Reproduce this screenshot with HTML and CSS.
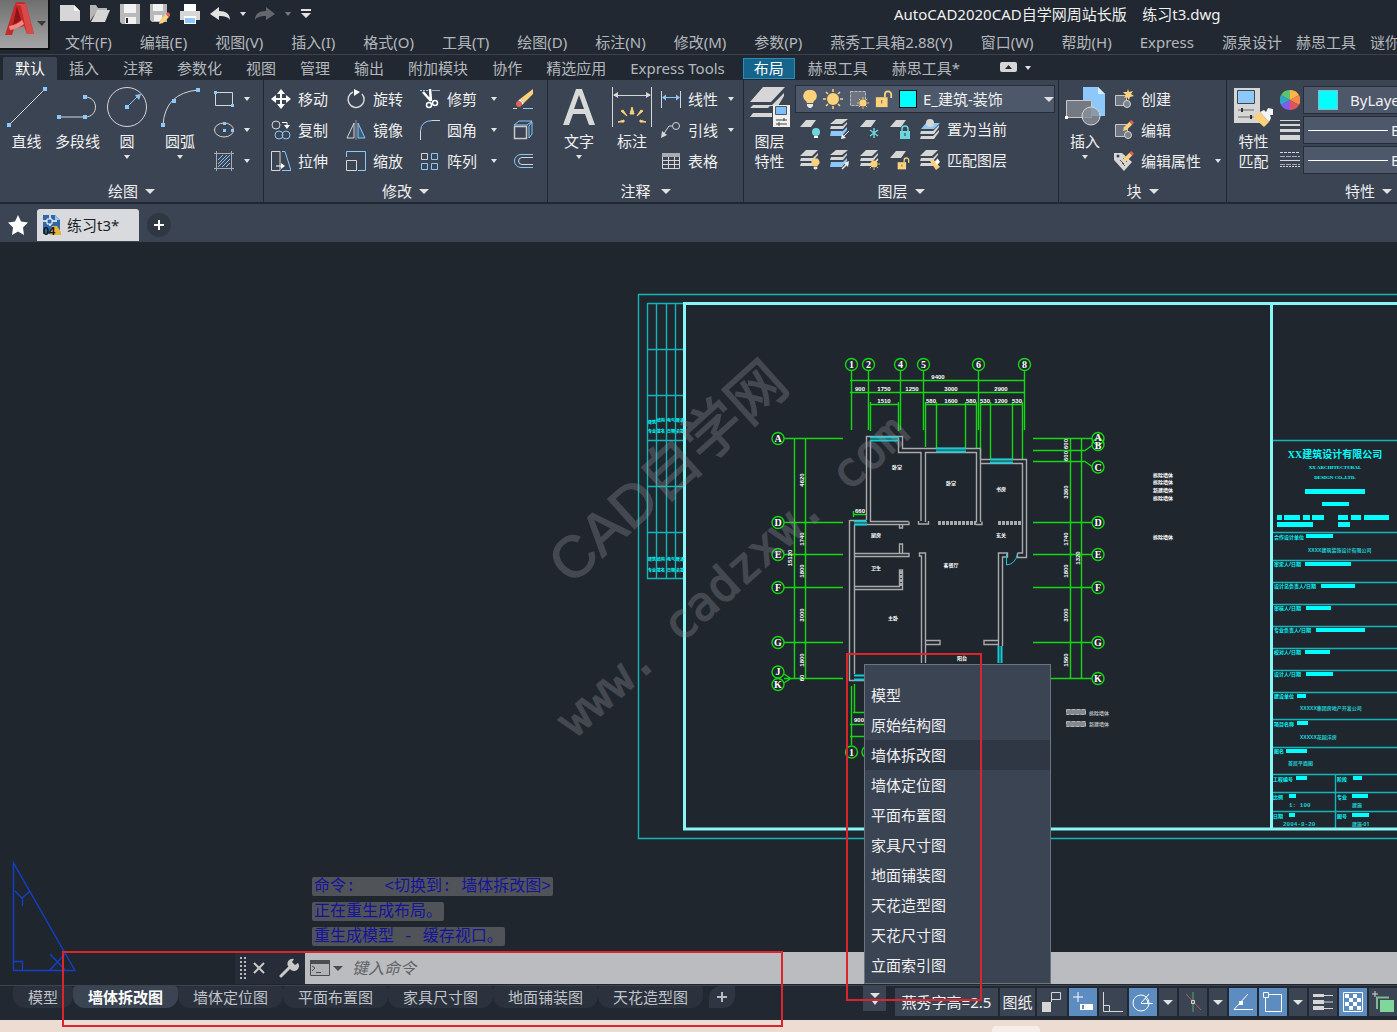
FILE: index.html
```html
<!DOCTYPE html>
<html lang="zh-CN">
<head>
    <meta charset="UTF-8">
    <meta name="viewport" content="width=device-width, initial-scale=1.0">
    <title>AutoCAD2020 练习t3.dwg</title>
    <link rel="stylesheet" href="styles.css">
</head>
<body>

<!-- shared icon parts -->
<svg class="defs" aria-hidden="true">
    <symbol id="sheet" viewBox="0 0 20 20"><path d="M6 1h10l-5 7H0z" fill="#d6d6d6"/></symbol>
    <symbol id="stack" viewBox="0 0 20 20">
        <path d="M6 0h12l-6 6H0z" fill="#d6d6d6"/>
        <path d="M1 8h12l5-5v2l-5 6H0zM1 13h12l5-5v2l-5 6H0z" fill="#d6d6d6"/>
    </symbol>
    <symbol id="stack-blue" viewBox="0 0 20 20">
        <path d="M6 0h12l-6 5H0z" fill="#d6d6d6"/>
        <path d="M1 7h12l4-4v2l-4 5H0z" fill="#d6d6d6"/>
        <path d="M1 12h12l4-4v3l-5 6H0z" fill="#8cc8fa"/>
    </symbol>
    <symbol id="bulb" viewBox="0 0 14 20">
        <path d="M7 1a6 6 0 0 0-4 11l1 2h6l1-2A6 6 0 0 0 7 1z" fill="#fdd27a"/>
        <path d="M4 15h6v2l-2 2H6l-2-2z" fill="#e8e8e8"/>
    </symbol>
    <symbol id="sun" viewBox="0 0 20 20">
        <circle cx="10" cy="10" r="6" fill="#fdd27a"/>
        <path d="M10 0v3M10 17v3M0 10h3M17 10h3M3 3l2 2M15 15l2 2M17 3l-2 2M5 15l-2 2" stroke="#fdd27a" stroke-width="1.5"/>
    </symbol>
    <symbol id="lock-open" viewBox="0 0 20 20">
        <path d="M1 8h13v11H1z" fill="#fdd27a"/>
        <path d="M11 8V5a3.500 3.500 0 0 1 7 0v4" fill="none" stroke="#fdd27a" stroke-width="2"/>
        <path d="M7 11h1v4H7z" fill="#6b5a30"/>
    </symbol>
    <symbol id="pencil" viewBox="0 0 12 12">
        <path d="M0 12l1-4 6-6 3 3-6 6z" fill="#fdd27a"/>
        <path d="M7 2l2-2 3 3-2 2z" fill="#e0605c"/>
    </symbol>
</svg>

<div class="app">

<header class="top">
    <button class="logo" aria-label="应用程序菜单">
        <svg width="50" height="49" viewBox="0 0 50 49">
            <path d="M5 35L15 4q1-2 4-2h3q3 0 4 2l8 30h-7l-3-8-10 3-2 6z" fill="#c62a2c"/>
            <path d="M17 6l4 14-8 5z" fill="#8a1416"/>
            <path d="M15 4l6 2 6 28h7L26 4z" fill="#d84a48"/>
            <path d="M9 26q8-1 13-6l2 4q-6 5-14 6z" fill="#ef8a84"/>
            <path d="M37 21h9l-4 5z" fill="#3a3a3a"/>
        </svg>
    </button>
    <div class="top-rows">
        <div class="quick">
            <button aria-label="新建"><svg width="20" height="20" viewBox="0 0 20 20"><path d="M0 1h14l6 6v10H0z" fill="#d6d6d6"/><path d="M14 1v6h6z" fill="#f6f6f6"/></svg></button>
            <button aria-label="打开"><svg width="20" height="20" viewBox="0 0 20 20"><path d="M0 17V1h6l2 3h9v3H7z" fill="#b5b5b5"/><path d="M1 18L7 6h13l-5 12z" fill="#d6d6d6"/></svg></button>
            <button aria-label="保存"><svg width="20" height="20" viewBox="0 0 20 20"><path d="M0 0h20v20H2l-2-2z" fill="#b9b9b9"/><path d="M4 0h12v9H4z" fill="#f2f2f2"/><path d="M5 13h11v7H5z" fill="#f2f2f2"/><path d="M6 14h2v5H6z" fill="#222831"/></svg></button>
            <button aria-label="另存为"><svg width="20" height="20" viewBox="0 0 20 20"><path d="M0 0h17v18H2l-2-2z" fill="#b9b9b9"/><path d="M3 0h10v7H3zM4 11h8v6H4z" fill="#f2f2f2"/><use href="#pencil" x="9" y="8" width="12" height="12"/></svg></button>
            <button aria-label="打印"><svg width="20" height="20" viewBox="0 0 20 20"><path d="M4 0h12v7H4z" fill="#fff"/><path d="M0 7h20v9H0z" fill="#d6d6d6"/><path d="M4 12h12v8H4z" fill="#fff"/><path d="M5 14h10v5H5z" fill="#8cc8fa"/></svg></button>
            <button aria-label="放弃"><svg width="20" height="20" viewBox="0 0 20 20"><path d="M0 10l9-7v4c7 0 11 3 11 9-2-3-5-4-11-4v4z" fill="#e2e2e2"/></svg></button>
            <button class="narrow" aria-label="放弃列表"><i class="caret"></i></button>
            <button aria-label="重做"><svg width="20" height="20" viewBox="0 0 20 20"><path d="M20 10l-9-7v4C4 7 0 10 0 16c2-3 5-4 11-4v4z" fill="#64686e"/></svg></button>
            <button class="narrow" aria-label="重做列表"><i class="caret dim"></i></button>
            <button class="customize" aria-label="自定义"><svg width="12" height="12" viewBox="0 0 12 12"><path d="M1 1h10v2H1zM1 5h10L6 10z" fill="#e2e2e2"/></svg></button>
            <span class="title">AutoCAD2020CAD自学网周站长版&nbsp;&nbsp;&nbsp; 练习t3.dwg</span>
        </div>
        <nav class="menubar">
            <a href="#">文件(F)</a>
            <a href="#">编辑(E)</a>
            <a href="#">视图(V)</a>
            <a href="#">插入(I)</a>
            <a href="#">格式(O)</a>
            <a href="#">工具(T)</a>
            <a href="#">绘图(D)</a>
            <a href="#">标注(N)</a>
            <a href="#">修改(M)</a>
            <a href="#">参数(P)</a>
            <a href="#">燕秀工具箱2.88(Y)</a>
            <a href="#">窗口(W)</a>
            <a href="#">帮助(H)</a>
            <a href="#">Express</a>
            <a href="#">源泉设计</a>
            <a href="#" class="tight">赫思工具</a>
            <a href="#" class="tight">谜你</a>
        </nav>
    </div>
</header>

<nav class="ribbon-tabs">
    <a href="#" class="current">默认</a>
    <a href="#">插入</a>
    <a href="#">注释</a>
    <a href="#">参数化</a>
    <a href="#">视图</a>
    <a href="#">管理</a>
    <a href="#">输出</a>
    <a href="#">附加模块</a>
    <a href="#">协作</a>
    <a href="#">精选应用</a>
    <a href="#">Express Tools</a>
    <a href="#" class="layout">布局</a>
    <a href="#">赫思工具</a>
    <a href="#">赫思工具*</a>
    <button class="collapse" aria-label="最小化功能区"><svg width="18" height="11" viewBox="0 0 18 11"><rect width="17" height="10" rx="2" fill="#d6d6d6"/><path d="M5 7h7L8.500 3z" fill="#222831"/></svg><i class="caret"></i></button>
</nav>

<section class="ribbon">
    <div class="panel draw">
        <div class="body">
            <button class="big"><svg width="40" height="40" viewBox="0 0 40 40"><path d="M2 38L38 2" stroke="#d6d6d6"/><path d="M0 36h4v4H0zM36 0h4v4h-4z" fill="#8cc8fa"/></svg>直线</button>
            <button class="big"><svg width="40" height="40" viewBox="0 0 40 40"><path d="M2 30h26c14 0 14-20 0-20" fill="none" stroke="#d6d6d6"/><path d="M0 28h4v4H0zM26 28h4v4h-4zM26 8h4v4h-4z" fill="#8cc8fa"/></svg>多段线</button>
            <button class="big"><svg width="40" height="40" viewBox="0 0 40 40"><circle cx="20" cy="20" r="19.500" fill="none" stroke="#d6d6d6"/><path d="M20 20L31 9" stroke="#8cc8fa"/><path d="M18 18h4v4h-4zM28 8l6-1-2 6z" fill="#8cc8fa"/></svg>圆<i class="caret"></i></button>
            <button class="big"><svg width="40" height="40" viewBox="0 0 40 40"><path d="M3 38Q5 6 38 3" fill="none" stroke="#d6d6d6"/><path d="M1 36h4v4H1zM12 12h4v4h-4zM36 1h4v4h-4z" fill="#8cc8fa"/></svg>圆弧<i class="caret"></i></button>
            <div class="col shapes">
                <button class="small" aria-label="矩形"><svg width="20" height="20" viewBox="0 0 20 20"><path d="M1.500 3.500h17v13h-17z" fill="none" stroke="#d6d6d6"/><path d="M0 2h3v3H0zM17 15h3v3h-3z" fill="#8cc8fa"/></svg><i class="caret"></i></button>
                <button class="small" aria-label="椭圆"><svg width="20" height="20" viewBox="0 0 20 20"><ellipse cx="10" cy="10" rx="9.500" ry="7" fill="none" stroke="#d6d6d6"/><path d="M9 2h3v3H9zM9 9h3v3H9zM17 9h3v3h-3z" fill="#8cc8fa"/></svg><i class="caret"></i></button>
                <button class="small" aria-label="图案填充"><svg width="20" height="20" viewBox="0 0 20 20"><path d="M0 2.500h20M0 17.500h20M2.500 0v20M17.500 0v20" stroke="#a9adb3"/><path d="M4 9l5-5M4 13l9-9M4 16L16 4M8 16l8-8M12 16l4-4" stroke="#8cc8fa"/></svg><i class="caret"></i></button>
            </div>
        </div>
        <h2>绘图<i class="caret wide"></i></h2>
    </div>

    <div class="panel modify">
        <div class="body">
            <div class="col">
                <button class="small"><svg width="20" height="20" viewBox="0 0 20 20"><path d="M10 0l4 5h-3v4h4V6l5 4-5 4v-3h-4v4h3l-4 5-4-5h3v-4H5v3l-5-4 5-4v3h4V5H6z" fill="#fff"/></svg>移动</button>
                <button class="small"><svg width="20" height="20" viewBox="0 0 20 20"><circle cx="5" cy="5" r="4" fill="none" stroke="#d6d6d6"/><circle cx="8" cy="15" r="4" fill="none" stroke="#8cc8fa"/><circle cx="15" cy="15" r="4" fill="none" stroke="#8cc8fa"/><path d="M11 2.500h5V7" fill="none" stroke="#fff"/><path d="M13 5h6l-3 4z" fill="#fff"/></svg>复制</button>
                <button class="small"><svg width="20" height="20" viewBox="0 0 20 20"><path d="M9 .5H.5v19H9V.5" fill="none" stroke="#d6d6d6"/><path d="M11 .5h3l6 19h-9" fill="none" stroke="#8cc8fa"/><path d="M5 15h7" stroke="#fff"/><path d="M10 12l4 3-4 3z" fill="#fff"/></svg>拉伸</button>
            </div>
            <div class="col">
                <button class="small"><svg width="20" height="20" viewBox="0 0 20 20"><path d="M7 3a8 8 0 1 0 9 2" fill="none" stroke="#d6d6d6" stroke-width="1.500"/><path d="M8 0l6 3-6 4z" fill="#fff"/></svg>旋转</button>
                <button class="small"><svg width="20" height="20" viewBox="0 0 20 20"><path d="M8 3v15H1z" fill="none" stroke="#d6d6d6"/><path d="M12 3v15h7z" fill="#365f7c" stroke="#8cc8fa"/><path d="M10 0v20" stroke="#8a9099"/></svg>镜像</button>
                <button class="small"><svg width="20" height="20" viewBox="0 0 20 20"><path d="M.5 6V.5h19v19H12" fill="none" stroke="#8cc8fa"/><path d="M.5 9.500h10v10H.5z" fill="none" stroke="#d6d6d6"/></svg>缩放</button>
            </div>
            <div class="col fixed">
                <button class="small"><svg width="20" height="20" viewBox="0 0 20 20"><path d="M0 1.500h8" stroke="#8cc8fa" stroke-dasharray="2 1"/><path d="M12 1.500h8" stroke="#a9adb3"/><path d="M3 3l8 9M10 0l1 12" stroke="#fff" stroke-width="2.500"/><circle cx="9" cy="16" r="2.500" fill="none" stroke="#fff" stroke-width="1.500"/><circle cx="15" cy="14" r="2.500" fill="none" stroke="#fff" stroke-width="1.500"/></svg>修剪<i class="caret"></i></button>
                <button class="small"><svg width="20" height="20" viewBox="0 0 20 20"><path d="M.5 20v-9" stroke="#d6d6d6"/><path d="M.5 11Q1 1 12 .5" fill="none" stroke="#8cc8fa"/><path d="M12 .5h8" stroke="#d6d6d6"/></svg>圆角<i class="caret"></i></button>
                <button class="small"><svg width="20" height="20" viewBox="0 0 20 20"><path d="M1.500 2.500h6v6h-6z" fill="none" stroke="#d6d6d6"/><path d="M11.500 2.500h6v6h-6zM1.500 12.500h6v6h-6zM11.500 12.500h6v6h-6z" fill="none" stroke="#8cc8fa"/></svg>阵列<i class="caret"></i></button>
            </div>
            <div class="col">
                <button class="small" aria-label="删除"><svg width="20" height="20" viewBox="0 0 20 20"><path d="M20 0v5l-9 9-4-4z" fill="#fdd27a"/><path d="M7 10l4 4-2 2-4-4z" fill="#fff"/><circle cx="6" cy="15" r="3" fill="#e0605c"/><path d="M0 19.500h4" stroke="#d6d6d6"/><path d="M10 19.500h10" stroke="#8cc8fa"/></svg></button>
                <button class="small" aria-label="分解"><svg width="20" height="20" viewBox="0 0 20 20"><path d="M1.500 6.500h12v12h-12z" fill="none" stroke="#c8c8c8" stroke-width="1.500"/><path d="M1 5l5-4h13l-5 4zM16 18V6l3-4v12z" fill="none" stroke="#8cc8fa"/></svg></button>
                <button class="small" aria-label="偏移"><svg width="20" height="20" viewBox="0 0 20 20"><path d="M20 3.500H8a6.500 6.500 0 0 0 0 13h12" fill="none" stroke="#8cc8fa"/><path d="M20 6.500H9a3.500 3.500 0 0 0 0 7h11" fill="none" stroke="#d6d6d6"/></svg></button>
            </div>
        </div>
        <h2>修改<i class="caret wide"></i></h2>
    </div>

    <div class="panel annotate">
        <div class="body">
            <button class="big"><svg width="40" height="40" viewBox="0 0 40 40"><path d="M4 38L17 2h6l13 36h-6l-4-11H14l-4 11zM15 22h10L20 8z" fill="#d9d9d9"/></svg>文字<i class="caret"></i></button>
            <button class="big"><svg width="40" height="40" viewBox="0 0 40 40"><path d="M.5 0v40M39.500 0v40M2 8.500h36" stroke="#d6d6d6"/><path d="M1 8l5-3v6zM39 8l-5-3v6z" fill="#d6d6d6"/><path d="M18 27l2-7 2 7zM9 24l2-1 4 6zM31 24l-2-1-4 6zM6 35l6-2v2zM34 35l-6-2v2z" fill="#fdd27a" stroke="#fdd27a"/></svg>标注</button>
            <div class="col fixed">
                <button class="small"><svg width="20" height="20" viewBox="0 0 20 20"><path d="M.5 2v17M19.500 2v17" stroke="#d6d6d6"/><path d="M2 8.500h16" stroke="#8cc8fa"/><path d="M1 8.500l4-3v6zM19 8.500l-4-3v6z" fill="#8cc8fa"/></svg>线性<i class="caret"></i></button>
                <button class="small"><svg width="20" height="20" viewBox="0 0 20 20"><circle cx="15" cy="6" r="3.500" fill="none" stroke="#d6d6d6"/><path d="M11 6H8l-6 9" fill="none" stroke="#d6d6d6"/><path d="M0 18l1-7 5 4z" fill="#d6d6d6"/></svg>引线<i class="caret"></i></button>
                <button class="small"><svg width="20" height="20" viewBox="0 0 20 20"><path d="M1.500 2.500h17v15h-17z" fill="none" stroke="#d6d6d6"/><path d="M1 2h18v4H1z" fill="#a9adb3"/><path d="M1 9.500h18M1 13.500h18M7.500 6v12M13.500 6v12" stroke="#d6d6d6"/></svg>表格</button>
            </div>
        </div>
        <h2>注释<i class="caret wide"></i></h2>
    </div>

    <div class="panel layers">
        <div class="body">
            <button class="big"><svg width="40" height="40" viewBox="0 0 40 40"><path d="M13 0h22L21 15H0zM3 18h19l12-12v3l-6 10h-8l-2 2H0zM3 26h19v4H0z" fill="#d6d6d6"/><path d="M23 18h17v22H23z" fill="#f0f0f0"/><path d="M25.500 19.500h11v8h-11z" fill="#7cc0ff" stroke="#555"/><path d="M26 33h11M26 37h11M34 31v3M29 35v4" stroke="#444"/></svg>图层<br>特性</button>
            <div class="layer-tools">
                <div class="combo">
                    <svg width="14" height="20"><use href="#bulb"/></svg>
                    <svg width="20" height="20"><use href="#sun"/></svg>
                    <svg width="20" height="20" viewBox="0 0 20 20"><path d="M1.500 2.500h15v14h-15z" fill="#6d7480" stroke="#b8bcc2" stroke-dasharray="3 1"/><use href="#sun" x="8" y="8" width="12" height="12"/></svg>
                    <svg width="18" height="20"><use href="#lock-open"/></svg>
                    <i class="swatch"></i>
                    <select aria-label="图层"><option>E_建筑-装饰</option></select>
                    <i class="caret wide"></i>
                </div>
                <div class="tool-row">
                    <button aria-label="关"><svg width="20" height="20" viewBox="0 0 20 20"><use href="#sheet"/><circle cx="16" cy="13" r="4" fill="#6fd5dc"/><path d="M14 17h4v2h-4z" fill="#fff"/></svg></button>
                    <button aria-label="隔离"><svg width="20" height="20" viewBox="0 0 20 20"><use href="#stack-blue"/><path d="M19 12l-6 6" stroke="#eee"/><path d="M11 20l1-5 4 4z" fill="#eee"/></svg></button>
                    <button aria-label="冻结"><svg width="20" height="20" viewBox="0 0 20 20"><use href="#sheet"/><path d="M14 9v10M10 11l8 6M18 11l-8 6" stroke="#6fd5dc" stroke-width="1.500"/></svg></button>
                    <button aria-label="锁定"><svg width="20" height="20" viewBox="0 0 20 20"><use href="#sheet"/><path d="M10 12h10v8H10z" fill="#6fd5dc"/><path d="M12 12v-2a3 3 0 0 1 6 0v2" fill="none" stroke="#6fd5dc" stroke-width="1.500"/><path d="M15 14v3" stroke="#234"/></svg></button>
                    <button><svg width="20" height="20" viewBox="0 0 20 20"><path d="M6 4h14l-6 6H1z" fill="#8cc8fa"/><circle cx="10" cy="4" r="4" fill="#d6d6d6"/><path d="M1 12h12l6-6v2l-5 7H0zM1 17h12l6-6v2l-5 7H0z" fill="#d6d6d6"/></svg>置为当前</button>
                </div>
                <div class="tool-row">
                    <button aria-label="打开所有图层"><svg width="20" height="20" viewBox="0 0 20 20"><use href="#stack"/><use href="#bulb" x="11" y="8" width="9" height="12"/></svg></button>
                    <button aria-label="取消隔离"><svg width="20" height="20" viewBox="0 0 20 20"><use href="#stack-blue"/><path d="M12 19l6-6" stroke="#eee" stroke-width="1.500"/><path d="M19 11l-1 6-4-4z" fill="#eee"/></svg></button>
                    <button aria-label="解冻所有图层"><svg width="20" height="20" viewBox="0 0 20 20"><use href="#stack"/><use href="#sun" x="8" y="8" width="12" height="12"/></svg></button>
                    <button aria-label="解锁"><svg width="20" height="20" viewBox="0 0 20 20"><use href="#sheet"/><use href="#lock-open" x="7" y="7" width="13" height="13"/></svg></button>
                    <button><svg width="20" height="20" viewBox="0 0 20 20"><use href="#stack"/><path d="M10 11l3-2 7 8-4 3z" fill="#fdd27a"/><path d="M15 12l3-3 2 3-3 3z" fill="#fff"/></svg>匹配图层</button>
                </div>
            </div>
        </div>
        <h2>图层<i class="caret wide"></i></h2>
    </div>

    <div class="panel block">
        <div class="body">
            <button class="big"><svg width="40" height="40" viewBox="0 0 40 40"><path d="M18 0h15l7 7v22H18z" fill="#8cc8fa"/><path d="M33 0v7h7z" fill="#d8eeff"/><path d="M1.500 13.500h25v17h-25z" fill="#747a84" stroke="#c8c8c8"/><circle cx="26" cy="29" r="9" fill="#8a909a" fill-opacity=".8" stroke="#d6d6d6"/><path d="M0 29h3v3H0z" fill="#fff"/></svg>插入<i class="caret"></i></button>
            <div class="col fixed">
                <button class="small"><svg width="20" height="20" viewBox="0 0 20 20"><path d="M1.500 6.500h11v10h-11z" fill="#6d7480" stroke="#c8c8c8"/><circle cx="13" cy="15" r="3.500" fill="#7c828c" stroke="#d6d6d6"/><path d="M14 0l1 3 4-1-2 3 3 2-4 1-1 3-2-3-3 1 2-3-3-3h4z" fill="#fdd27a"/></svg>创建</button>
                <button class="small"><svg width="20" height="20" viewBox="0 0 20 20"><path d="M1.500 4.500h12v12h-12z" fill="#6d7480" stroke="#c8c8c8"/><circle cx="14" cy="15" r="3.500" fill="#7c828c" stroke="#d6d6d6"/><use href="#pencil" x="9" y="0" width="11" height="11"/></svg>编辑</button>
                <button class="small"><svg width="20" height="20" viewBox="0 0 20 20"><path d="M0 2h8l10 9-8 9L0 9z" fill="#d6d6d6"/><path d="M6 9l4 4M9 7l4 4M8 12l3 3" stroke="#555"/><circle cx="4" cy="5" r="1.500" fill="#3b4453"/><use href="#pencil" x="9" y="0" width="11" height="11"/></svg>编辑属性<i class="caret"></i></button>
            </div>
        </div>
        <h2>块<i class="caret wide"></i></h2>
    </div>

    <div class="panel props">
        <div class="body">
            <button class="big"><svg width="40" height="40" viewBox="0 0 40 40"><path d="M0 1h26v35H0z" fill="#d6d6d6"/><path d="M3.500 3.500h17v13h-17z" fill="#8cc8fa" stroke="#444"/><path d="M4 23h16M4 30h16" stroke="#666"/><path d="M8 21v4M17 28v4" stroke="#333" stroke-width="2"/><path d="M19 30l7-5 9 10-5 5z" fill="#fdd27a"/><path d="M26 25l4-2 2 2 2-4 5 1v6h-3l1 3-2 4z" fill="#f4f4f4"/></svg>特性<br>匹配</button>
            <div class="prop-rows">
                <div class="prop">
                    <svg width="20" height="20" viewBox="0 0 20 20"><path d="M10 10V0a10 10 0 0 1 9 5z" fill="#fdb54a"/><path d="M10 10l9-5a10 10 0 0 1 0 10z" fill="#f58a4b"/><path d="M10 10l9 5a10 10 0 0 1-9 5z" fill="#e0525c"/><path d="M10 10v10a10 10 0 0 1-9-5z" fill="#8a58e8"/><path d="M10 10l-9 5A10 10 0 0 1 1 5z" fill="#2fa5c8"/><path d="M10 10L1 5a10 10 0 0 1 9-5z" fill="#5cc46c"/></svg>
                    <div class="combo"><i class="swatch"></i><select aria-label="颜色"><option>ByLayer</option></select></div>
                </div>
                <div class="prop">
                    <svg width="20" height="20" viewBox="0 0 20 20"><path d="M0 0h20v1H0zM0 4h20v2H0zM0 9h20v3H0zM0 15h20v5H0z" fill="#d6d6d6"/></svg>
                    <div class="combo"><i class="line"></i><select aria-label="线宽"><option>ByLayer</option></select></div>
                </div>
                <div class="prop">
                    <svg width="20" height="20" viewBox="0 0 20 20"><path d="M0 2.500h20" stroke="#d6d6d6" stroke-dasharray="3 1"/><path d="M0 6.500h20M0 14.500h20" stroke="#a9adb3" stroke-dasharray="5 1"/><path d="M0 10.500h20" stroke="#d6d6d6"/><path d="M0 16.500h20" stroke="#d6d6d6" stroke-dasharray="2 1"/></svg>
                    <div class="combo"><i class="line"></i><select aria-label="线型"><option>ByLayer</option></select></div>
                </div>
            </div>
        </div>
        <h2>特性<i class="caret wide"></i></h2>
    </div>
</section>

<div class="file-tabs">
    <button class="star" aria-label="开始"><svg width="20" height="20" viewBox="0 0 20 20"><path d="M10 0l3 6.500 7 1-5 5 1 7.500-6-3.500L4 20l1-7.500-5-5 7-1z" fill="#fff"/></svg></button>
    <a href="#" class="file">
        <svg width="20" height="22" viewBox="0 0 20 22"><path d="M1 1h12l5 5v14H1z" fill="#2f68a8"/><path d="M13 1v5h5z" fill="#9cc4ea"/><path d="M8 1v11M1 7h14" stroke="#fff" stroke-width="1.500"/><path d="M5 5h5v5H5z" fill="#2f68a8" stroke="#fff"/><path d="M10 12h5l4 6v3H8z" fill="#e8b23c"/><text x="1" y="21" class="badge04">04</text></svg>
        练习t3*
    </a>
    <button class="add-file" aria-label="新图形"><svg width="12" height="12" viewBox="0 0 12 12"><path d="M6 1v10M1 6h10" stroke="#fff" stroke-width="2"/></svg></button>
</div>

<main class="workspace">
    <svg class="drawing" width="100%" height="100%">
        <g transform="translate(0 -242)">
            <!-- sheet frame -->
            <g class="frame">
                <path d="M1400 294.500H638.500v544H1400M647.500 303v275.500H683M647.500 303.500H684M656.500 303v275M666.500 303v275M675.500 303v275"/>
                <path d="M647 349.500h36M647 395.500h36M647 440.500h36M647 486.500h36M647 532.500h36"/>
                <path d="M1272 440.500h128M1272 532.500h128M1272 560.500h128M1272 582.500h128M1272 604.500h128M1272 626.500h128M1272 648.500h128M1272 670.500h128M1272 692.500h128M1272 719.500h128M1272 747.500h128M1272 774.500h128M1272 792.500h128M1272 811.500h128M1335.500 774v55"/>
                <path class="thick" d="M1400 303.500H684.500V829H1400M1271.500 303v526"/>
            </g>
            <g class="stamp">
                <text x="648" y="424">建筑</text><text x="657" y="422">结构</text><text x="667" y="422">电气</text><text x="676" y="422">暖通</text>
                <text x="648" y="433">专业</text><text x="657" y="433">签名</text><text x="667" y="433">日期</text><text x="676" y="433">会签</text>
                <text x="648" y="561">建筑</text><text x="657" y="561">结构</text><text x="667" y="561">电气</text><text x="676" y="561">暖通</text>
                <text x="648" y="572">专业</text><text x="657" y="572">签名</text><text x="667" y="572">日期</text><text x="676" y="572">会签</text>
            </g>

            <!-- axis grid and dimensions -->
            <g class="dim">
                <path d="M851.500 371v59M868.500 371v59M900.500 371v59M923.500 371v59M978.500 371v59M1024.500 371v59"/>
                <path d="M850 380.500h175M850 392.500h175M870 404.500h29M925 404.500h51M980 404.500h42"/>
                <path d="M870.500 402v29M898.500 402v29M925.500 402v45M936.500 402v46M965.500 402v46M976.500 402v46M980.500 402v57M990.500 402v57M1012.500 402v57M1022.500 402v57"/>
                <path d="M784 438.500h59M784 522.500h59M784 554.500h59M784 587.500h59M784 642.500h59M784 678.500h59M784 674l6 4M784 683l6-4M794.500 438v241M805.500 438v241"/>
                <path d="M1033 438.500h59M1033 450.500h52l7-5M1033 461.500h52l7 5M1033 522.500h59M1033 554.500h59M1033 587.500h59M1033 642.500h59M1045 678.500h47M1070.500 438v241M1081.500 438v241"/>
                <path d="M853 514.500h14M853.500 511v6M851.500 686v59M854.500 684v28M853 712.500h12M850 724.500h15M850 736.500h15"/>
                <circle cx="851.500" cy="364.500" r="6"/><circle cx="868.500" cy="364.500" r="6"/><circle cx="900.500" cy="364.500" r="6"/><circle cx="923.500" cy="364.500" r="6"/><circle cx="978.500" cy="364.500" r="6"/><circle cx="1024.500" cy="364.500" r="6"/>
                <circle cx="778" cy="438.500" r="6"/><circle cx="778" cy="522.500" r="6"/><circle cx="778" cy="554.500" r="6"/><circle cx="778" cy="587.500" r="6"/><circle cx="778" cy="642.500" r="6"/><circle cx="778" cy="672" r="6"/><circle cx="778" cy="684.500" r="6"/>
                <circle cx="1098" cy="438.500" r="6"/><circle cx="1098" cy="444.500" r="6"/><circle cx="1098" cy="467" r="6"/><circle cx="1098" cy="522.500" r="6"/><circle cx="1098" cy="554.500" r="6"/><circle cx="1098" cy="587.500" r="6"/><circle cx="1098" cy="642.500" r="6"/><circle cx="1098" cy="678.500" r="6"/>
                <circle cx="851.500" cy="752" r="6"/><circle cx="868" cy="752" r="6"/>
            </g>
            <g class="axis">
                <text x="851.500" y="368">1</text><text x="868.500" y="368">2</text><text x="900.500" y="368">4</text><text x="923.500" y="368">5</text><text x="978.500" y="368">6</text><text x="1024.500" y="368">8</text>
                <text x="778" y="442">A</text><text x="778" y="526">D</text><text x="778" y="558">E</text><text x="778" y="591">F</text><text x="778" y="646">G</text><text x="778" y="675">J</text><text x="778" y="688">K</text>
                <text x="1098" y="441">A</text><text x="1098" y="449">B</text><text x="1098" y="471">C</text><text x="1098" y="526">D</text><text x="1098" y="558">E</text><text x="1098" y="591">F</text><text x="1098" y="646">G</text><text x="1098" y="682">K</text>
                <text x="851.500" y="756">1</text>
            </g>
            <g class="num">
                <text x="938" y="379">9400</text>
                <text x="860" y="391">900</text><text x="884" y="391">1750</text><text x="912" y="391">1250</text><text x="951" y="391">3000</text><text x="1001" y="391">2900</text>
                <text x="884" y="403">1510</text><text x="931" y="403">580</text><text x="951" y="403">1600</text><text x="971" y="403">580</text><text x="985" y="403">530</text><text x="1001" y="403">1200</text><text x="1017" y="403">530</text>
                <text x="860" y="513">660</text><text x="859" y="722">900</text>
                <text transform="translate(804 480) rotate(-90)">4620</text><text transform="translate(804 539) rotate(-90)">1740</text><text transform="translate(804 571) rotate(-90)">1800</text><text transform="translate(804 615) rotate(-90)">3000</text><text transform="translate(804 660) rotate(-90)">1800</text><text transform="translate(804 678) rotate(-90)">60</text><text transform="translate(792 558) rotate(-90)">15120</text>
                <text transform="translate(1068 444) rotate(-90)">600</text><text transform="translate(1068 456) rotate(-90)">600</text><text transform="translate(1068 492) rotate(-90)">3360</text><text transform="translate(1068 539) rotate(-90)">1740</text><text transform="translate(1068 571) rotate(-90)">1800</text><text transform="translate(1068 615) rotate(-90)">3000</text><text transform="translate(1068 660) rotate(-90)">1560</text><text transform="translate(1080 558) rotate(-90)">1320</text>
            </g>

            <!-- floor plan -->
            <g class="wall">
                <path d="M866.500 520V436.500h36v12h78v11h46v98h-9V553M870.500 440v81.500h38M898.500 436v16.500h22.500v68.500M925.500 452v70M925 452.500h51.500v70M980.500 459v63M980 463.500h42.500v89.500h-5"/>
                <path d="M909 521.500v3h-55M918.500 521v3h10v-3M976 524.500h6v-3M850 520.500h16M849.500 520v160.500H864M854.500 525v149"/>
                <path d="M854 553.500h55v3h-55M899.500 553v-9h3v9M899.500 524v4h3v-4M854 586.500h45.500V570h3v19.500h-48"/>
                <path d="M925.500 663v-110h-6v3h2v107M925 640.500h15v4h-15M998.500 646v-93h9v4h-5v89M998 640.500h-14v4h14"/>
                <path class="hatch" d="M938 523h38M998 523h24M901 571v16"/>
            </g>
            <g class="window">
                <path d="M870 437.500h29M870 440.500h29M936 448.500h30M936 451.500h30M990 459.500h23M990 462.500h23M854 521.500h13M854 524.500h13M998.500 646v17M1001.500 646v17M854 675.500h10M854 679.500h10" stroke-width="2"/>
                <path d="M1006.500 554v11q9-1 11-11"/>
            </g>
            <g class="room">
                <text x="897" y="469">卧室</text><text x="951" y="485">卧室</text><text x="1001" y="491">书房</text><text x="876" y="537">厨房</text><text x="1001" y="537">玄关</text><text x="951" y="567">客餐厅</text><text x="876" y="570">卫生</text><text x="893" y="620">主卧</text><text x="962" y="660">阳台</text>
                <text x="1163" y="477">拆除墙体</text><text x="1163" y="484">拆除墙体</text><text x="1163" y="492">新建墙体</text><text x="1163" y="500">拆除墙体</text><text x="1163" y="539">拆除墙体</text>
            </g>
            <g class="legend">
                <path d="M1066.500 709.500h19v5h-19zM1066.500 721.500h19v5h-19z"/>
                <text x="1099" y="715">拆除墙体</text><text x="1099" y="726">新建墙体</text>
            </g>

            <!-- title block -->
            <g class="block-text">
                <text class="company" x="1335" y="458">XX建筑设计有限公司</text>
                <text class="mid" x="1335" y="469">XX ARCHITECTURAL</text>
                <text class="mid" x="1335" y="479">DESIGN CO.,LTD.</text>
                <path d="M1305 489h60v5h-60zM1322 502h27v4h-27zM1277 515h5v5h-5zM1284 515h16v5h-16zM1303 515h7v5h-7zM1312 515h12v5h-12zM1277 522h36v5h-36zM1338 515h10v5h-10zM1351 515h10v5h-10zM1364 515h25v5h-25zM1338 522h12v5h-12z"/>
                <path d="M1306 534h27v4h-27zM1305 562h46v4h-46zM1321 584h34v4h-34zM1306 606h25v4h-25zM1316 628h49v4h-49zM1305 650h25v4h-25zM1306 672h27v4h-27zM1297 694h9v4h-9zM1297 721h11v4h-11zM1286 749h21v4h-21zM1296 776h11v4h-11zM1353 776h9v4h-9zM1289 794h7v4h-7zM1352 794h16v4h-16zM1289 813h6v4h-6zM1352 813h17v4h-17z"/>
                <text x="1274" y="539">合作设计单位</text>
                <text x="1274" y="566">审定人/日期</text>
                <text x="1274" y="588">设计总负责人/日期</text>
                <text x="1274" y="610">审核人/日期</text>
                <text x="1274" y="632">专业负责人/日期</text>
                <text x="1274" y="654">校对人/日期</text>
                <text x="1274" y="676">设计人/日期</text>
                <text x="1274" y="698">建设单位</text>
                <text x="1274" y="726">项目名称</text>
                <text x="1274" y="753">图名</text>
                <text x="1273" y="781">工程编号</text><text x="1337" y="781">阶段</text>
                <text x="1273" y="799">比例</text><text x="1337" y="799">专业</text>
                <text x="1273" y="818">日期</text><text x="1337" y="818">图号</text>
                <g class="value">
                    <text x="1308" y="552">XXXX建筑装饰设计有限公司</text>
                    <text x="1300" y="710">XXXXX集团房地产开发公司</text>
                    <text x="1300" y="739">XXXXX花园洋房</text>
                    <text x="1288" y="765">首层平面图</text>
                    <text class="code" x="1289" y="807">1: 100</text><text x="1352" y="807">建施</text>
                    <text class="code" x="1283" y="826">2004-8-20</text><text x="1352" y="826">建施-01</text>
                </g>
            </g>

            <g class="watermark">
                <text class="cn" transform="translate(571 586) rotate(-42)">CAD自学网</text>
                <text class="url" transform="translate(575 739) rotate(-42)">www. cadzxw. com</text>
            </g>

            <!-- paper space UCS icon -->
            <path class="ucs" d="M13.500 863v107.500H75zM13 961.500h9.500v9M15 891l7 7 8-7M22.500 898v8M50 954l15 16M65 954l-15 16"/>
        </g>
    </svg>

    <div class="history">
        <p>命令:&nbsp;&nbsp; &lt;切换到: 墙体拆改图&gt;</p>
        <p>正在重生成布局。</p>
        <p>重生成模型 - 缓存视口。</p>
    </div>
    <div class="command">
        <svg width="7" height="22" viewBox="0 0 7 22"><path d="M1 0v22M5 0v22" stroke="#b8b8b8" stroke-width="2" stroke-dasharray="2 2"/></svg>
        <button aria-label="关闭"><svg width="12" height="12" viewBox="0 0 12 12"><path d="M1 1l10 10M11 1L1 11" stroke="#c8c8c8" stroke-width="2"/></svg></button>
        <button aria-label="自定义"><svg width="20" height="20" viewBox="0 0 20 20"><path d="M2 18l9-9" stroke="#c8c8c8" stroke-width="3" stroke-linecap="round"/><path d="M9 8a5 5 0 0 1 6-7l-2 3 3 3 3-2a5 5 0 0 1-8 6z" fill="#c8c8c8"/></svg></button>
        <label class="prompt">
            <svg width="20" height="16" viewBox="0 0 20 16"><path d="M.5.500h19v15H.5z" fill="#b0b2b6" stroke="#4a4c50"/><path d="M0 0h20v4H0z" fill="#4a4c50"/><path d="M2 6l3 2-3 3M6 12.500h5" fill="none" stroke="#4a4c50"/></svg>
            <i class="caret wide dark"></i>
            <input type="text" aria-label="命令行" placeholder="键入命令">
        </label>
    </div>
</main>

<footer class="bottom">
    <nav class="layouts">
        <a href="#">模型</a>
        <a href="#" class="current">墙体拆改图</a>
        <a href="#">墙体定位图</a>
        <a href="#">平面布置图</a>
        <a href="#">家具尺寸图</a>
        <a href="#">地面铺装图</a>
        <a href="#">天花造型图</a>
        <button aria-label="新建布局"><svg width="12" height="12" viewBox="0 0 12 12"><path d="M6 1v10M1 6h10" stroke="#b8bcc2" stroke-width="2"/></svg></button>
    </nav>
    <div class="status">
        <div class="more">
            <button aria-label="更多布局"><svg width="10" height="12" viewBox="0 0 10 12"><path d="M0 0h10L5 5zM2 8h6l-3 4z" fill="#e2e2e2"/></svg></button>
            <ul class="popup">
                <li><a href="#">模型</a></li>
                <li><a href="#">原始结构图</a></li>
                <li><a href="#" class="hover">墙体拆改图</a></li>
                <li><a href="#">墙体定位图</a></li>
                <li><a href="#">平面布置图</a></li>
                <li><a href="#">家具尺寸图</a></li>
                <li><a href="#">地面铺装图</a></li>
                <li><a href="#">天花造型图</a></li>
                <li><a href="#">天花尺寸图</a></li>
                <li><a href="#">立面索引图</a></li>
            </ul>
        </div>
        <button class="height">燕秀字高=2.5</button>
        <button class="paper">图纸</button>
        <button class="wider" aria-label="推断约束"><svg width="20" height="22" viewBox="0 0 20 22"><path d="M0 11h9v10H0z" fill="#d6d6d6"/><path d="M9.500 11V1.500h9v7h-9" fill="none" stroke="#d6d6d6"/></svg></button>
        <button class="on" aria-label="动态输入"><svg width="20" height="20" viewBox="0 0 20 20"><path d="M5 0v10M0 5h10" stroke="#fff"/><path d="M7 12h13v6H7z" fill="#fff"/><path d="M9 13h2v4H9z" fill="#5d8cc0"/></svg></button>
        <button aria-label="正交"><svg width="20" height="20" viewBox="0 0 20 20"><path d="M.5 0v19.500H20M.5 13.500h6v6" fill="none" stroke="#d6d6d6"/></svg></button>
        <button class="on" aria-label="极轴追踪"><svg width="22" height="20" viewBox="0 0 22 20"><circle cx="9" cy="11" r="8" fill="none" stroke="#fff"/><path d="M9 11.500h12M9 11l8-9" stroke="#fff"/><path d="M13 6q3 2 3 6" fill="none" stroke="#fff"/></svg></button>
        <button class="drop" aria-label="极轴选项"><i class="caret wide"></i></button>
        <button aria-label="等轴测草图"><svg width="20" height="20" viewBox="0 0 20 20"><path d="M10 0v20" stroke="#4fae70"/><path d="M3 2l15 16" stroke="#b85a5e"/><path d="M8.500 8.500h3v3h-3z" fill="none" stroke="#d6d6d6"/></svg></button>
        <button class="drop" aria-label="等轴测选项"><i class="caret wide"></i></button>
        <button class="on" aria-label="对象捕捉追踪"><svg width="20" height="20" viewBox="0 0 20 20"><path d="M15 2L1 17.500h19" fill="none" stroke="#fff"/><path d="M6 9h4v4H6z" fill="#fff"/></svg></button>
        <button class="on" aria-label="对象捕捉"><svg width="20" height="22" viewBox="0 0 20 22"><path d="M6 3.500h12.500v17H2.500V7" fill="none" stroke="#fff"/><path d="M.5 1.500h5v5h-5z" fill="none" stroke="#fff"/></svg></button>
        <button class="drop" aria-label="捕捉选项"><i class="caret wide"></i></button>
        <button aria-label="线宽"><svg width="20" height="18" viewBox="0 0 20 18"><path d="M0 2.500h20M0 9h20M0 15.500h20" stroke="#d6d6d6"/><path d="M0 1h11v3H0zM0 7h11v4H0zM0 13h11v4H0z" fill="#d6d6d6"/></svg></button>
        <button class="on" aria-label="透明度"><svg width="20" height="20" viewBox="0 0 20 20"><path d="M.5.500h19v19H.5z" fill="none" stroke="#fff"/><path d="M2 2h4v4H2zM10 2h4v4h-4zM6 6h4v4H6zM14 6h4v4h-4zM2 10h4v4H2zM10 10h4v4h-4zM6 14h4v4H6zM14 14h4v4h-4z" fill="#fff"/></svg></button>
        <button aria-label="选择循环"><svg width="22" height="22" viewBox="0 0 22 22"><path d="M3 0v6M0 3h6" stroke="#d6d6d6"/><path d="M5 18V6.500h12" fill="none" stroke="#7fb894" stroke-width="2"/><path d="M8 9h14v12H8z" fill="#7ed89a"/></svg></button>
    </div>
</footer>

<div class="desktop"><i></i></div>

<div class="mark mark-tabs"></div>
<div class="mark mark-popup"></div>

</div>

</body>
</html>
```
FILE: styles.css
```css
* {
    box-sizing: border-box;
}

body {
    margin: 0;
    font-family: "Noto Sans", "Noto Sans CJK SC", sans-serif;
    font-size: 15px;
    line-height: 20px;
    color: #f0f0f0;
    background: #222831;
    overflow: hidden;
}

a {
    color: inherit;
    text-decoration: none;
    white-space: nowrap;
}

button {
    font: inherit;
    color: inherit;
    background: none;
    border: none;
    padding: 0;
    white-space: nowrap;
}

button svg,
.combo svg,
.prop svg {
    flex: none;
}

.defs {
    display: none;
}

.app {
    position: relative;
    display: flex;
    flex-direction: column;
    height: 100vh;
    overflow: hidden;
}

.caret {
    width: 0;
    height: 0;
    flex: none;
    border: 3px solid transparent;
    border-top: 4px solid #e2e2e2;
    border-bottom: 0;
}

.caret.wide {
    border-width: 5px 5px 0;
}

.caret.dim {
    border-top-color: #777b82;
}

.caret.dark {
    border-top-color: #4a4c50;
}

/* title bar and menus */
.top {
    display: flex;
    height: 55px;
    border-bottom: 1px solid #3b424d;
}

.logo {
    flex: none;
    width: 50px;
    height: 50px;
    background: linear-gradient(#6f6f6f, #a5a5a5);
    border-right: 2px solid #101214;
    border-bottom: 2px solid #101214;
    overflow: hidden;
}

.top-rows {
    flex: 1;
    min-width: 0;
}

.quick {
    display: flex;
    align-items: center;
    gap: 10px;
    height: 28px;
    padding-left: 10px;
}

.quick button {
    display: flex;
    flex: none;
    justify-content: center;
    width: 20px;
}

.quick .narrow {
    width: 5px;
}

.quick .customize {
    width: 12px;
}

.title {
    margin-left: 572px;
    white-space: nowrap;
}

.menubar {
    display: flex;
    gap: 28px;
    padding: 4px 0 0 15px;
    color: #b4b8bd;
}

.menubar .tight {
    margin-left: -14px;
}

.ribbon-tabs {
    display: flex;
    align-items: flex-end;
    height: 25px;
    padding-left: 3px;
    color: #b4b8bd;
}

.ribbon-tabs a {
    padding: 0 12px 1px;
    line-height: 22px;
}

.ribbon-tabs .current {
    background: #3b4453;
    color: #fff;
    border-radius: 2px 2px 0 0;
}

.ribbon-tabs .layout {
    margin: 0 1px 1px 6px;
    padding: 0 10px;
    line-height: 19px;
    color: #fff;
    background: #14648c;
    border: 1px solid #2d8bb8;
}

.collapse {
    display: flex;
    align-items: center;
    gap: 7px;
    margin-left: 28px;
    height: 25px;
}

/* ribbon */
.ribbon {
    display: flex;
    flex: none;
    height: 124px;
    border-bottom: 2px solid #222831;
    background: #3b4453;
    overflow: hidden;
}

.panel {
    flex: none;
    display: flex;
    flex-direction: column;
    padding-top: 3px;
    border-right: 1px solid #222831;
}

.panel h2 {
    display: flex;
    flex: none;
    justify-content: center;
    align-items: center;
    gap: 7px;
    margin: 0;
    font-size: 15px;
    font-weight: 400;
    line-height: 30px;
}

.body {
    display: grid;
    flex: none;
    height: 93px;
}

.draw { width: 264px; }
.modify { width: 284px; }
.annotate { width: 196px; }
.layers { width: 315px; }
.block { width: 168px; }
.props { width: 284px; }

.draw .body {
    grid-template-columns: 53px 49px 50px 56px 55px;
}

.modify .body {
    grid-template-columns: 75px 74px 93px 20px;
    padding-left: 7px;
}

.annotate .body {
    grid-template-columns: 62px 44px 83px;
}

.annotate .col {
    padding-left: 7px;
}

.layers .body {
    grid-template-columns: 51px 1fr;
}

.block .body {
    grid-template-columns: 52px 106px;
    column-gap: 3px;
}

.props .body {
    grid-template-columns: 53px 1fr;
}

.big {
    display: flex;
    flex-direction: column;
    align-items: center;
    justify-self: center;
    padding-top: 4px;
}

.big svg {
    margin-bottom: 4px;
}

.big .caret {
    margin-top: 4px;
}

.col {
    display: grid;
    grid-template-rows: repeat(3, 31px);
}

.shapes {
    padding-left: 6px;
}

.small {
    display: flex;
    align-items: center;
    gap: 7px;
}

.shapes .small {
    gap: 10px;
}

.fixed .caret {
    margin-left: 7px;
}

.annotate .caret {
    margin-left: 3px;
}

.annotate .big .caret {
    margin-left: 0;
}

.combo {
    display: flex;
    align-items: center;
    gap: 6px;
    height: 28px;
    background: #4d586b;
    border: 1px solid #262d38;
}

.combo select {
    appearance: none;
    flex: 1;
    min-width: 0;
    padding: 0;
    border: none;
    background: none;
    color: inherit;
    font: inherit;
}

.swatch {
    flex: none;
    width: 18px;
    height: 18px;
    background: #00ffff;
    border: 1px solid #111;
}

.layer-tools .combo {
    margin: 2px 3px 0 0;
    padding-left: 7px;
}

.tool-row {
    display: flex;
    gap: 10px;
    height: 31px;
    padding-left: 5px;
}

.tool-row button {
    display: flex;
    align-items: center;
    gap: 7px;
}

.prop-rows {
    display: grid;
    grid-template-rows: repeat(3, 28px);
    row-gap: 2px;
    padding-top: 3px;
}

.prop {
    display: flex;
    align-items: center;
    gap: 3px;
}

.prop .combo {
    flex: 1;
    gap: 12px;
    padding-left: 14px;
}

.prop .swatch {
    width: 20px;
    height: 20px;
    border-color: #8fb8c0;
}

.prop .line {
    flex: none;
    width: 80px;
    height: 1px;
    background: #fff;
}

.prop + .prop .combo {
    gap: 3px;
    padding-left: 4px;
}

/* file tabs */
.file-tabs {
    display: flex;
    flex: none;
    align-items: center;
    height: 38px;
    padding: 5px 0 1px 8px;
    background: #3b4453;
}

.star,
.add-file {
    display: flex;
    align-items: center;
    justify-content: center;
}

.file {
    display: flex;
    align-items: center;
    gap: 5px;
    height: 32px;
    margin: 0 8px 0 9px;
    padding: 0 20px 0 5px;
    color: #1c1f24;
    background: #d8dade;
    border-radius: 3px 3px 0 0;
}

.badge04 {
    font: bold 11px "Liberation Sans", sans-serif;
    fill: #111;
}

.add-file {
    width: 24px;
    height: 24px;
    border-radius: 50%;
    background: #2f3743;
}

/* drawing area */
.workspace {
    position: relative;
    display: flex;
    flex: 1;
    flex-direction: column;
    justify-content: flex-end;
    min-height: 0;
    background: #20262e;
}

.drawing {
    position: absolute;
    inset: 0;
}

.frame path {
    fill: none;
    stroke: #14b4b8;
    stroke-width: 1.4;
}

.frame .thick {
    stroke: #86f6f6;
    stroke-width: 3;
}

.stamp text {
    font-size: 4px;
    font-weight: bold;
    fill: #00ffff;
}

.dim {
    fill: none;
    stroke: #14d814;
    stroke-width: 1.4;
}

.axis text {
    font: bold 10px "Liberation Serif", serif;
    fill: #fff;
    text-anchor: middle;
}

.num text {
    font: bold 6px "Liberation Sans", sans-serif;
    fill: #fff;
    text-anchor: middle;
}

.wall path {
    fill: none;
    stroke: #a8aaac;
    stroke-width: 1.4;
}

.wall .hatch {
    stroke-width: 4;
    stroke-dasharray: 3 1;
}

.window path {
    fill: none;
    stroke: #10ccd4;
}

.room text,
.legend text {
    font-size: 5px;
    font-weight: bold;
    fill: #fff;
    text-anchor: middle;
}

.legend path {
    fill: #85888c;
    stroke: #b0b2b5;
    stroke-dasharray: 4 1;
}

.legend text {
    fill: #b4b6b8;
}

.block-text {
    font-size: 5px;
    font-weight: bold;
    fill: #00ffff;
}

.block-text .company {
    font: bold 10px "Liberation Serif", "Noto Sans CJK SC", serif;
    text-anchor: middle;
}

.block-text .mid {
    font: bold 5px "Liberation Serif", serif;
    text-anchor: middle;
}

.value {
    fill: #1ccdd2;
}

.value .code {
    font: bold 6px "Liberation Mono", monospace;
}

.watermark {
    fill: #a0a2ac;
    stroke: #a0a2ac;
    stroke-width: 1.4;
    opacity: 0.28;
}

.watermark .cn {
    font: 58px "Liberation Sans", "Noto Sans CJK SC", sans-serif;
}

.watermark .url {
    font: 47px "DejaVu Sans Mono", monospace;
}

.ucs {
    fill: none;
    stroke: #1240c8;
    stroke-width: 1.4;
}

.history {
    position: relative;
    display: flex;
    flex-direction: column;
    align-items: flex-start;
    gap: 6px;
    margin: 0 0 6px 312px;
}

.history p {
    height: 19px;
    margin: 0;
    padding: 0 2px;
    font-family: "Liberation Mono", "Noto Sans CJK SC", monospace;
    font-size: 16px;
    line-height: 20px;
    color: #14149a;
    background: #505357;
    border-radius: 2px;
}

.command {
    position: relative;
    display: flex;
    align-items: center;
    height: 32px;
    margin: 0 0 1px 235px;
    padding-left: 5px;
    background: #272d38;
}

.command button {
    display: flex;
    margin-left: 6px;
}

.command button + button {
    margin: 0 6px 0 14px;
}

.prompt {
    display: flex;
    flex: 1;
    align-items: center;
    gap: 3px;
    height: 32px;
    padding-left: 5px;
    background: #bbbcc0;
}

.prompt input {
    flex: 1;
    margin-left: 6px;
    padding: 0;
    border: none;
    outline: none;
    background: none;
    color: #333;
    font: italic 16px "Noto Sans", "Noto Sans CJK SC", sans-serif;
}

.prompt input::placeholder {
    color: #626468;
}

/* layout tabs and status bar */
.bottom {
    display: flex;
    flex: none;
    justify-content: space-between;
    height: 35px;
    border-top: 1px solid #3d444f;
    background: #222831;
}

.layouts {
    display: flex;
    align-items: flex-start;
    padding-left: 13px;
    color: #c0c3c8;
}

.layouts a {
    padding: 0 15px;
    line-height: 22px;
    background: #2b323e;
    border-radius: 4px 4px 12px 12px;
}

.layouts .current {
    color: #fff;
    font-weight: bold;
    background: #3b4453;
}

.layouts button {
    display: flex;
    align-items: center;
    justify-content: center;
    width: 26px;
    height: 22px;
    margin-left: 6px;
    background: #2e3643;
    border-radius: 12px 0 12px 0;
}

.status {
    display: flex;
    gap: 2px;
    padding: 2px 0 4px;
}

.status button {
    display: flex;
    align-items: center;
    justify-content: center;
    width: 28px;
    height: 28px;
    background: #3b4453;
}

.status .wider {
    width: 30px;
}

.status .on {
    background: #5d8cc0;
}

.status .drop {
    width: 18px;
}

.status .height {
    width: 103px;
}

.status .paper {
    width: 35px;
}

.more {
    position: relative;
    margin: -2px 7px 0 0;
}

.status .more button {
    width: 23px;
    height: 25px;
}

.popup {
    position: absolute;
    left: 1px;
    bottom: 100%;
    width: 187px;
    margin: 0 0 2px;
    padding: 15px 0 3px;
    list-style: none;
    background: #3b4453;
    border: 1px solid #6c7480;
}

.popup a {
    display: block;
    padding-left: 6px;
    line-height: 30px;
}

.popup .hover {
    background: #2f3745;
}

.desktop {
    flex: none;
    height: 12px;
    padding: 6px 0 0 71%;
    background: #ecdcd2;
}

.desktop i {
    display: block;
    width: 48px;
    height: 6px;
    background: #f6eeea;
    border-radius: 4px 4px 0 0;
}

/* red highlight boxes over the window */
.mark {
    position: absolute;
    border: 2px solid #da242e;
    pointer-events: none;
}

.mark-tabs {
    left: 62px;
    bottom: 5px;
    width: 721px;
    height: 76px;
}

.mark-popup {
    left: 846px;
    bottom: 31px;
    width: 136px;
    height: 348px;
}
```
